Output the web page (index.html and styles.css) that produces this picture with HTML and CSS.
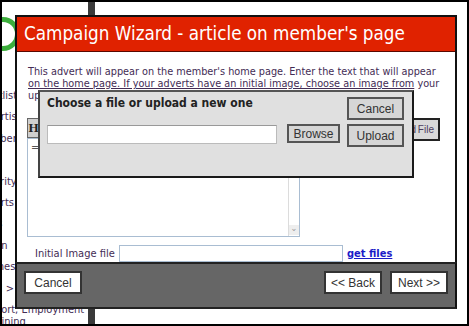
FILE: index.html
```html
<!DOCTYPE html>
<html lang="en">
<head>
    <meta charset="UTF-8">
    <title>Campaign Wizard</title>
    <link rel="stylesheet" href="styles.css">
</head>
<body>
    <div class="screen">
        <!-- page behind the wizard -->
        <div class="page">
            <div class="sidebar">
                <div class="logo"></div>
                <ul class="nav">
                    <li>Shortlist</li>
                    <li>Advertising</li>
                    <li>Members</li>
                    <li></li>
                    <li>Security</li>
                    <li>Reports</li>
                    <li>Ideas</li>
                    <li>Admin</li>
                    <li>Themes</li>
                    <li>Legal &gt;</li>
                    <li>Support, Employment<br>&amp; Training</li>
                </ul>
            </div>
            <div class="divider"></div>
            <div class="main"></div>
        </div>

        <div class="wizard">
            <div class="wizard-head">Campaign Wizard - article on member's page</div>
            <div class="wizard-body">
                <p class="intro">This advert will appear on the member's home page. Enter the text that will appear<br><span class="u">on the home page. If your adverts have an initial image, choose an image from</span> your<br>uploaded files or upload a new one.</p>
                <div class="toolbar">
                    <span class="tb-btn">H</span>
                    <button class="file-btn">Upload File</button>
                </div>
                <div class="editor">
                    <span class="editor-text">=</span>
                    <div class="scroll"><span class="arrow">&#8964;</span></div>
                </div>
                <div class="image-row">
                    <label for="imageFile">Initial Image file</label>
                    <input type="text" id="imageFile">
                    <a href="#" class="get-files">get files</a>
                </div>
            </div>
            <div class="wizard-foot">
                <button class="foot-btn">Cancel</button>
                <div class="foot-right">
                    <button class="foot-btn">&lt;&lt; Back</button>
                    <button class="foot-btn">Next &gt;&gt;</button>
                </div>
            </div>
        </div>

        <div class="upload">
            <div class="upload-left">
                <div class="upload-title">Choose a file or upload a new one</div>
                <div class="upload-row">
                    <input type="text" class="upload-input">
                    <button class="gray-btn browse">Browse</button>
                </div>
            </div>
            <div class="upload-right">
                <button class="gray-btn side">Cancel</button>
                <button class="gray-btn side">Upload</button>
            </div>
        </div>
    </div>
</body>
</html>
```

FILE: styles.css
```css
body {
    margin: 0;
    padding: 0;
    background: #fff;
    font-family: "DejaVu Sans Condensed", "DejaVu Sans", sans-serif;
}

.screen {
    position: relative;
    width: 469px;
    height: 326px;
    border: 2px solid #000;
    box-sizing: border-box;
    overflow: hidden;
    background: #fff;
}

/* page behind */
.page {
    display: flex;
    height: 100%;
}

.sidebar {
    width: 112px;
    margin-left: -26px;
    flex-shrink: 0;
}

.logo {
    width: 24px;
    height: 24px;
    border: 5px solid #3cae3c;
    border-radius: 50%;
    margin: 15px 0 0 10px;
}

.nav {
    list-style: none;
    margin: 0;
    padding: 0;
    margin-top: 39px;
    font-size: 11px;
    line-height: 12px;
    color: #432c55;
    display: flex;
    flex-direction: column;
    gap: 9.4px;
}

.nav li {
    min-height: 12px;
    white-space: nowrap;
}

.divider {
    width: 7px;
    background: #3a3a3a;
    flex-shrink: 0;
}

.main {
    flex: 1;
}

/* wizard */
.wizard {
    position: absolute;
    left: 13px;
    top: 13px;
    width: 442px;
    height: 294px;
    border: 2px solid #111;
    border-bottom: none;
    box-sizing: border-box;
    background: #fff;
    display: flex;
    flex-direction: column;
}

.wizard-head {
    height: 34px;
    background: #e02200;
    border-bottom: 1px solid #5a0800;
    color: #fff;
    font-size: 18.7px;
    line-height: 34px;
    padding-left: 7px;
}

.wizard-body {
    flex: 1;
    padding: 14px 10px 0 10px;
}

.intro {
    margin: 0 0 0 1px;
    font-size: 10.8px;
    line-height: 12px;
    color: #432c55;
    white-space: nowrap;
}

.intro .u {
    text-decoration: underline;
}

.toolbar {
    display: flex;
    justify-content: space-between;
    align-items: flex-start;
    height: 20px;
    margin-top: 16px;
    width: 413px;
}

.tb-btn {
    width: 11px;
    height: 18px;
    background: #cfcfcf;
    border: 1px solid #666;
    font-family: "Liberation Serif", serif;
    font-weight: bold;
    font-size: 13px;
    line-height: 18px;
    text-align: center;
    color: #222;
}

.file-btn {
    height: 23px;
    padding: 0 4px 0 8px;
    background: #d9d9d9;
    border: 2px solid #222;
    font-family: "Liberation Sans", Arial, sans-serif;
    font-size: 10px;
    word-spacing: -1px;
    color: #4d3d5e;
}

.editor {
    position: relative;
    width: 273px;
    height: 99px;
    border: 1px solid #a9bdd2;
    box-sizing: border-box;
}

.editor-text {
    position: absolute;
    left: 3px;
    top: 2px;
    font-size: 11px;
    color: #555;
}

.scroll {
    position: absolute;
    right: 0;
    top: 0;
    bottom: 0;
    width: 10px;
    border-left: 1px solid #dcdcdc;
    display: flex;
    align-items: flex-end;
}

.arrow {
    width: 10px;
    height: 10px;
    background: #eee;
    font-size: 9px;
    line-height: 6px;
    text-align: center;
    color: #999;
    margin-bottom: 1px;
}

.image-row {
    display: flex;
    align-items: center;
    margin-top: 8px;
    padding-left: 8px;
    height: 17px;
}

.image-row label {
    width: 84px;
    font-size: 11px;
    color: #432c55;
}

.image-row input {
    width: 224px;
    height: 17px;
    box-sizing: border-box;
    border: 1px solid #a9bdd2;
    padding: 0;
}

.get-files {
    margin-left: 4px;
    font-size: 11px;
    font-weight: bold;
    color: #1b1bc8;
}

.wizard-foot {
    height: 33px;
    background: #666;
    border-top: 2px solid #222;
    border-bottom: 2px solid #222;
    display: flex;
    justify-content: space-between;
    padding: 7px 7px 3px 7px;
    box-sizing: content-box;
    margin: 0 -2px;
    border-left: 2px solid #111;
    border-right: 2px solid #111;
}

.foot-right {
    display: flex;
    gap: 8px;
}

.foot-btn {
    width: 58px;
    height: 23px;
    background: #fff;
    border: 2px solid #333;
    font-family: "Liberation Sans", Arial, sans-serif;
    font-size: 12px;
    color: #333;
    padding: 0;
}

/* upload dialog */
.upload {
    position: absolute;
    left: 36px;
    top: 88px;
    width: 376px;
    height: 88px;
    box-sizing: border-box;
    background: #e0e0e0;
    border: 2px solid #1a1a1a;
    border-top-color: #555;
    border-left-color: #444;
    padding: 5px 8px 0 7px;
    display: flex;
    justify-content: space-between;
}

.upload-title {
    font-size: 12px;
    font-weight: bold;
    line-height: 13px;
    color: #222;
}

.upload-row {
    display: flex;
    align-items: flex-start;
    gap: 10px;
    margin-top: 14px;
}

.upload-input {
    width: 230px;
    height: 19px;
    margin-top: 1px;
    box-sizing: border-box;
    border: 1px solid #bbb;
    border-top-color: #999;
    background: #fff;
    padding: 0;
}

.gray-btn {
    background: #d6d6d6;
    border: 2px solid #555;
    font-family: "Liberation Sans", Arial, sans-serif;
    font-size: 12px;
    color: #333;
    padding: 0;
}

.browse {
    width: 53px;
    height: 19px;
}

.upload-right {
    display: flex;
    flex-direction: column;
    gap: 4px;
}

.side {
    width: 57px;
    height: 23px;
}
```
